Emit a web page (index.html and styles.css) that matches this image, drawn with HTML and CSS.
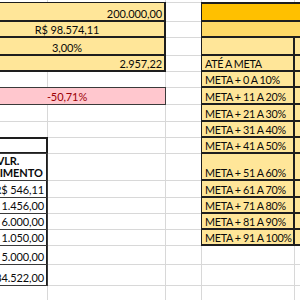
FILE: index.html
```html
<!DOCTYPE html>
<html>
<head>
<meta charset="utf-8">
<link rel="stylesheet" href="styles.css">
</head>
<body>
<div class="sheet">
  <div class="c"></div><div class="c"></div><div class="c"></div><div class="c"></div><div class="c"></div>

  <div class="c s2 y bx r">200.000,00</div><div class="c"></div><div class="c s2 or bx top"></div>
  <div class="c s2 y bx m">R$ 98.574,11</div><div class="c"></div><div class="c s2 go bx"></div>
  <div class="c s2 y bx m">3,00%</div><div class="c"></div><div class="c y bx"></div><div class="c y bx"></div>
  <div class="c s2 y bx r">2.957,22</div><div class="c"></div><div class="c y bx lbl">ATÉ A META</div><div class="c y bx"></div>
  <div class="c"></div><div class="c"></div><div class="c"></div><div class="c y bx lbl">META + 0 A 10%</div><div class="c y bx"></div>
  <div class="c s2 bad tn m">-50,71%</div><div class="c"></div><div class="c y bx lbl">META + 11 A 20%</div><div class="c y bx"></div>
  <div class="c"></div><div class="c"></div><div class="c"></div><div class="c y bx lbl">META + 21 A 30%</div><div class="c y bx"></div>
  <div class="c"></div><div class="c"></div><div class="c"></div><div class="c y bx lbl">META + 31 A 40%</div><div class="c y bx"></div>
  <div class="c tb thk"></div><div class="c"></div><div class="c"></div><div class="c y bx lbl">META + 41 A 50%</div><div class="c y bx"></div>
  <div class="c tb head">VLR.<br>MOVIMENTO</div><div class="c"></div><div class="c"></div><div class="c y bx lbl">META + 51 A 60%</div><div class="c y bx"></div>
  <div class="c tb r">R$ 546,11</div><div class="c"></div><div class="c"></div><div class="c y bx lbl">META + 61 A 70%</div><div class="c y bx"></div>
  <div class="c tb r">R$ 1.456,00</div><div class="c"></div><div class="c"></div><div class="c y bx lbl">META + 71 A 80%</div><div class="c y bx"></div>
  <div class="c tb r">R$ 6.000,00</div><div class="c"></div><div class="c"></div><div class="c y bx lbl">META + 81 A 90%</div><div class="c y bx"></div>
  <div class="c tb r">R$ 1.050,00</div><div class="c"></div><div class="c"></div><div class="c y bx lbl">META + 91 A 100%</div><div class="c y bx"></div>
  <div class="c tb r">R$ 5.000,00</div><div class="c"></div><div class="c"></div><div class="c"></div><div class="c"></div>
  <div class="c tb r">R$ 84.522,00</div><div class="c"></div><div class="c"></div><div class="c"></div><div class="c"></div>
  <div class="c"></div><div class="c"></div><div class="c"></div><div class="c"></div><div class="c"></div>
</div>
</body>
</html>
```
FILE: styles.css
```css
html, body {
  margin: 0;
  background: #fff;
  overflow: hidden;
}
body {
  font-family: Lato, "Liberation Sans", sans-serif;
  font-size: 11px;
  letter-spacing: -0.1px;
  color: #0a0a0a;
}
.sheet {
  display: grid;
  grid-template-columns: 78px 117px 35px 92px 80px;
  grid-template-rows: 17px 18px 15px 17px 15px 15px 16px 16px 15px 15px 26px 16px 15px 15px 15px 18px 20px 25px;
  gap: 1px;
  background: #d8d8d8;
  margin: -15px 0 0 -31px;
  width: max-content;
}
.c {
  background: #fff;
  display: flex;
  align-items: flex-end;
  padding: 0 3px 0;
  line-height: 15px;
  white-space: nowrap;
  min-width: 0;
}
.lbl {
  font-size: 10.8px;
  letter-spacing: -0.3px;
  word-spacing: -0.3px;
}
.s2 { grid-column: span 2; }
.r { justify-content: flex-end; }
.m { justify-content: center; }
.y { background: #ffe699; }
.or { background: #ffc000; }
.go { background: #ffd966; }
.bad { background: #ffc7ce; color: #9c0006; }
.bx { box-shadow: 0 0 0 1px #1e1e1e, inset -1px -1px 0 #1e1e1e; }
.top { box-shadow: 0 0 0 1px #1e1e1e, inset -1px -1px 0 #1e1e1e, inset 0 1px 0 #1e1e1e; }
.tn { box-shadow: 0 0 0 1px #3a3a3a; }
.tb { box-shadow: 0 0 0 1px #3a3a3a, inset -1px 0 0 #1e1e1e; }
.thk { box-shadow: 0 0 0 1px #1e1e1e, inset -1px -1px 0 #1e1e1e, inset 0 1px 0 #1e1e1e; }
.head {
  font-weight: bold;
  white-space: normal;
  text-align: center;
  justify-content: center;
  align-items: center;
  line-height: 12px;
}
```
